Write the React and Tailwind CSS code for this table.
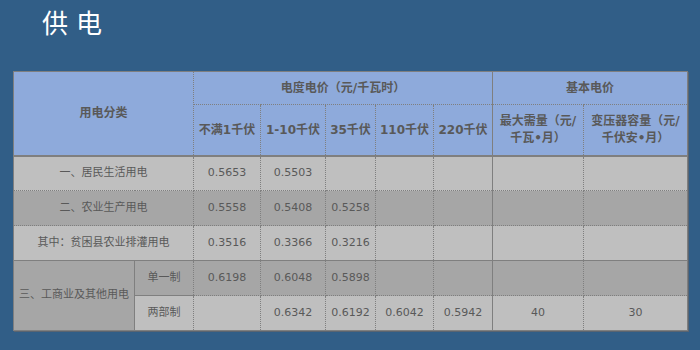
import React from "react";

const FONT = { fontFamily: '"DejaVu Sans", "Noto Sans CJK SC", sans-serif' };

const LIGHT = "bg-[#bfbfbf]";
const DARK = "bg-[#a6a6a6]";

const PRICE_COLS = ["不满1千伏", "1-10千伏", "35千伏", "110千伏", "220千伏"];

const ROWS = [
  { name: "一、居民生活用电", bg: LIGHT, values: ["0.5653", "0.5503", "", "", "", "", ""] },
  { name: "二、农业生产用电", bg: DARK, values: ["0.5558", "0.5408", "0.5258", "", "", "", ""] },
  { name: "其中：贫困县农业排灌用电", bg: LIGHT, values: ["0.3516", "0.3366", "0.3216", "", "", "", ""] },
];

const cell = "border border-dotted border-[#7f7f7f] text-center align-middle p-0";
// solid edges where the sheet has them
const solidL = "[border-left-style:solid]";
const solidT = "[border-top-style:solid]";
const solidB = "[border-bottom-style:solid]";

export default function App() {
  return (
    <div className="w-[700px] h-[350px] bg-[#315e87] overflow-hidden" style={FONT}>
      <div className="pl-[42px] pt-[7px] h-[71px]">
        <h1
          className="text-white text-[26px] leading-[30px] tracking-[8px] font-normal"
          style={{ fontFamily: '"Noto Sans CJK SC", sans-serif' }}
        >
          供电
        </h1>
      </div>

      <table className="ml-[13px] w-[674px] table-fixed border-collapse border border-[#7f7f7f] text-[#595959] shadow-[1px_1px_0_#5a6470]">
        <colgroup>
          <col className="w-[121px]" />
          <col className="w-[59px]" />
          <col className="w-[67px]" />
          <col className="w-[65px]" />
          <col className="w-[50px]" />
          <col className="w-[58px]" />
          <col className="w-[59px]" />
          <col className="w-[91px]" />
          <col className="w-[104px]" />
        </colgroup>
        <thead className="bg-[#8eaadb] text-[12px] font-bold">
          <tr className="h-[33px]">
            <th colSpan={2} rowSpan={2} className={`${cell} border-b-2 ${solidB}`}>
              用电分类
            </th>
            <th colSpan={5} className={cell}>
              电度电价（元/千瓦时）
            </th>
            <th colSpan={2} className={`${cell} ${solidL}`}>
              基本电价
            </th>
          </tr>
          <tr className="h-[51px]">
            {PRICE_COLS.map((label) => (
              <th key={label} className={`${cell} border-b-2 ${solidB} whitespace-nowrap`}>
                {label}
              </th>
            ))}
            <th className={`${cell} border-b-2 ${solidB} ${solidL} leading-[17px]`}>
              最大需量（元/
              <br />
              千瓦•月）
            </th>
            <th className={`${cell} border-b-2 ${solidB} leading-[17px]`}>
              变压器容量（元/
              <br />
              千伏安•月）
            </th>
          </tr>
        </thead>
        <tbody className="text-[11px]">
          {ROWS.map((r) => (
            <tr key={r.name} className={`h-[35px] ${r.bg}`}>
              <td colSpan={2} className={cell}>
                {r.name}
              </td>
              {r.values.map((v, i) => (
                <td key={i} className={`${cell} ${i === 5 ? solidL : ""}`}>
                  {v}
                </td>
              ))}
            </tr>
          ))}
          <tr className={`h-[35px] ${DARK}`}>
            <td rowSpan={2} className={`${cell} border-solid`}>
              三、工商业及其他用电
            </td>
            <td className={`${cell} ${solidT} ${solidB} ${solidL}`}>单一制</td>
            <td className={`${cell} ${solidT}`}>0.6198</td>
            <td className={`${cell} ${solidT}`}>0.6048</td>
            <td className={`${cell} ${solidT}`}>0.5898</td>
            <td className={`${cell} ${solidT}`}></td>
            <td className={`${cell} ${solidT}`}></td>
            <td className={`${cell} ${solidT} ${solidL}`}></td>
            <td className={`${cell} ${solidT}`}></td>
          </tr>
          <tr className={`h-[35px] ${LIGHT}`}>
            <td className={`${cell} ${solidL}`}>两部制</td>
            <td className={cell}></td>
            <td className={cell}>0.6342</td>
            <td className={cell}>0.6192</td>
            <td className={cell}>0.6042</td>
            <td className={cell}>0.5942</td>
            <td className={`${cell} ${solidL}`}>40</td>
            <td className={cell}>30</td>
          </tr>
        </tbody>
      </table>
    </div>
  );
}
